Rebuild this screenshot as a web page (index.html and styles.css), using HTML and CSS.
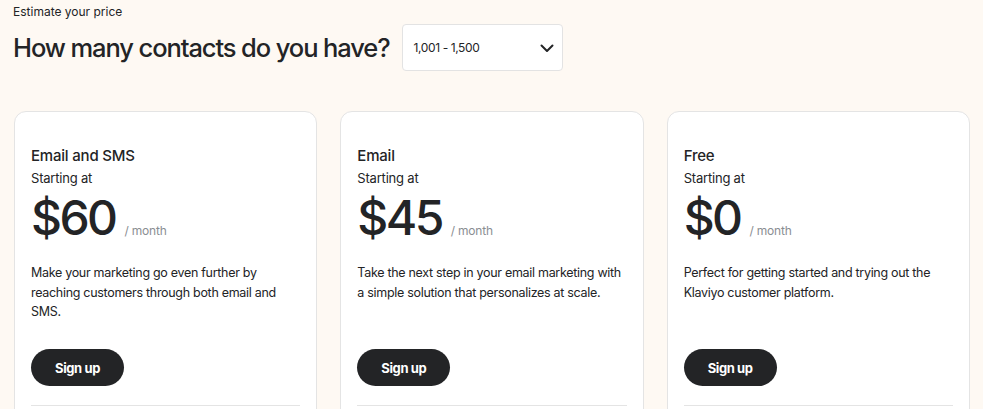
FILE: index.html
```html
<!DOCTYPE html>
<html>
<head>
<meta charset="utf-8">
<link rel="stylesheet" href="styles.css">
</head>
<body>
<div class="page">
  <div class="eyebrow">Estimate your price</div>
  <div class="question-row">
    <h1 class="question">How many contacts do you have?</h1>
    <div class="select">
      <span class="select-value">1,001 - 1,500</span>
      <svg class="chev" width="16" height="16" viewBox="0 0 16 16"><path d="M2.5 5.5 L8 11 L13.5 5.5" fill="none" stroke="#232426" stroke-width="2" stroke-linecap="round" stroke-linejoin="round"/></svg>
    </div>
  </div>
  <div class="cards">
    <div class="card">
      <div class="plan">Email and SMS</div>
      <div class="starting">Starting at</div>
      <div class="price-row"><span class="price">$60</span><span class="per">/ month</span></div>
      <p class="desc">Make your marketing go even further by reaching customers through both email and SMS.</p>
      <button class="btn">Sign up</button>
      <div class="divider"></div>
    </div>
    <div class="card">
      <div class="plan">Email</div>
      <div class="starting">Starting at</div>
      <div class="price-row"><span class="price">$45</span><span class="per">/ month</span></div>
      <p class="desc">Take the next step in your email marketing with a simple solution that personalizes at scale.</p>
      <button class="btn">Sign up</button>
      <div class="divider"></div>
    </div>
    <div class="card">
      <div class="plan">Free</div>
      <div class="starting">Starting at</div>
      <div class="price-row"><span class="price">$0</span><span class="per">/ month</span></div>
      <p class="desc">Perfect for getting started and trying out the Klaviyo customer platform.</p>
      <button class="btn">Sign up</button>
      <div class="divider"></div>
    </div>
  </div>
</div>
</body>
</html>
```
FILE: styles.css
```css
* { box-sizing: border-box; }
html, body { margin: 0; padding: 0; }
body {
  background: #fef9f3;
  font-family: Inter, "Liberation Sans", sans-serif;
  color: #232426;
  overflow: hidden;
  height: 409px;
}
.page { padding: 4px 13px 0 14px; }
.eyebrow { font-size: 12px; line-height: 16px; margin-left: -1px; }
.question-row {
  display: flex;
  align-items: center;
  margin-top: 4px;
  gap: 12px;
}
.question {
  margin: 0 0 0 -1px;
  font-size: 25.5px;
  font-weight: 500;
  letter-spacing: -1.1px;
  line-height: 46px;
}
.select {
  width: 161px;
  height: 47px;
  background: #fff;
  border: 1px solid #e3e3e3;
  border-radius: 4px;
  display: flex;
  align-items: center;
  justify-content: space-between;
  padding: 0 7px 0 11px;
}
.select-value { font-size: 12px; letter-spacing: -0.4px; }
.chev { display: block; }
.cards {
  display: flex;
  gap: 23px;
  margin-top: 40px;
}
.card {
  width: 304px;
  height: 310px;
  background: #fff;
  border: 1px solid #e4e4e4;
  border-radius: 12px;
  padding: 34px 16px 0 16px;
}
.plan { font-size: 15px; font-weight: 500; line-height: 20px; letter-spacing: -0.2px; }
.starting { font-size: 13px; line-height: 18px; margin-top: 3px; letter-spacing: -0.2px; }
.price-row { display: flex; align-items: baseline; margin-top: 4px; height: 54px; }
.price { font-size: 48px; font-weight: 500; letter-spacing: -2.6px; line-height: 54px; }
.per { font-size: 12px; color: #8a8e92; margin-left: 9px; letter-spacing: -0.2px; }
.desc {
  margin: 18px 0 0 0;
  font-size: 12.5px;
  line-height: 19.5px;
  height: 59px;
  letter-spacing: -0.3px;
}
.btn {
  display: block;
  margin-top: 27px;
  width: 93px;
  height: 37px;
  border: none;
  border-radius: 19px;
  background: #232426;
  color: #fff;
  font-family: Inter, "Liberation Sans", sans-serif;
  font-size: 13px;
  font-weight: 700;
  letter-spacing: -0.4px;
}
.divider { margin-top: 19px; height: 1px; background: #e4e4e4; }
```
